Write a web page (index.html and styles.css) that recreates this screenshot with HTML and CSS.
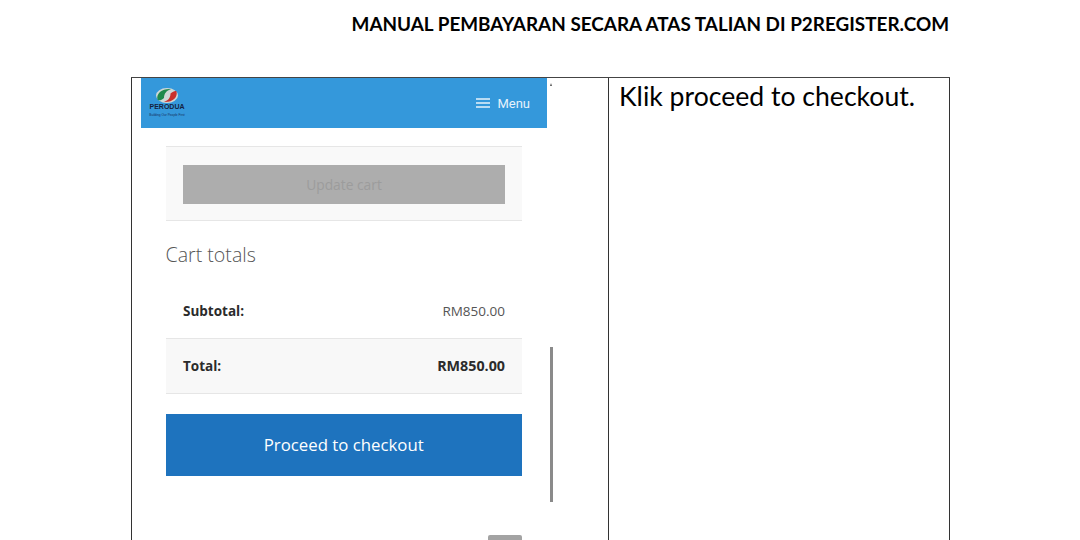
FILE: index.html
```html
<!DOCTYPE html>
<html lang="en">
<head>
  <meta charset="UTF-8">
  <title>Manual Pembayaran</title>
  <link rel="stylesheet" href="styles.css">
</head>
<body>
  <h1 class="doc-title">MANUAL PEMBAYARAN SECARA ATAS TALIAN DI P2REGISTER.COM</h1>

  <div class="doc-table">
    <div class="shot-cell">
      <div class="phone">
        <header class="nav">
          <div class="logo">
            <svg class="logo-mark" width="22" height="15" viewBox="0 0 22 15">
              <ellipse cx="11" cy="7.500" rx="11" ry="7.500" fill="#cfd8d6"/>
              <path d="M1.500 11.500C0 5.500 6 .5 15 1C10.500 2.500 8 5.500 8 10C5.500 12.500 2.500 13 1.500 11.500Z" fill="#1f8a4c"/>
              <path d="M20.500 3.500C22 9 17 14.500 8 14C12.500 12.500 14.500 9.500 14.500 5.500C17 3.500 19.500 2.500 20.500 3.500Z" fill="#c9302c"/>
            </svg>
            <span class="logo-name">PERODUA</span>
            <span class="logo-tag">Building Our People First</span>
          </div>
          <div class="menu">
            <svg width="14" height="10" viewBox="0 0 14 10">
              <path d="M0 1H14M0 5H14M0 9H14" stroke="#e6f2fb" stroke-width="1.300" fill="none"/>
            </svg>
            <span>Menu</span>
          </div>
        </header>

        <div class="content">
          <div class="update-row">
            <button class="update-btn">Update cart</button>
          </div>

          <h2 class="totals-title">Cart totals</h2>

          <div class="totals">
            <div class="totals-row">
              <strong>Subtotal:</strong>
              <span>RM850.00</span>
            </div>
            <div class="totals-row shaded">
              <strong>Total:</strong>
              <strong class="amount">RM850.00</strong>
            </div>
          </div>

          <button class="checkout-btn">Proceed to checkout</button>
          <div class="top-btn"></div>
        </div>
      </div>
      <div class="scroll-arrow"></div>
      <div class="scroll-thumb"></div>
    </div>
    <div class="text-cell">Klik proceed to checkout.</div>
  </div>
</body>
</html>
```

FILE: styles.css
```css
html, body {
  margin: 0;
  padding: 0;
  height: 540px;
  overflow: hidden;
  background: #fff;
  font-family: "Open Sans", "Liberation Sans", sans-serif;
}

/* document heading */
.doc-title {
  margin: 0;
  height: 77px;
  box-sizing: border-box;
  padding: 12px 131px 0 0;
  text-align: right;
  font-family: Lato, "Liberation Sans", sans-serif;
  font-size: 18.900px;
  line-height: 24px;
  font-weight: 700;
  color: #000;
}

/* two column table */
.doc-table {
  display: grid;
  grid-template-columns: 477px 342px;
  width: 819px;
  height: 463px;
  margin-left: 131px;
  box-sizing: border-box;
  border-top: 1px solid #444;
}

.shot-cell {
  position: relative;
  border-left: 1px solid #333;
  padding-left: 9px;
  overflow: hidden;
}

.text-cell {
  border-left: 1px solid #333;
  border-right: 1px solid #333;
  padding: 1px 0 0 10px;
  font-family: Lato, "Liberation Sans", sans-serif;
  font-size: 26.600px;
  line-height: 34px;
  color: #000;
}

/* screenshot of the phone page */
.phone {
  width: 406px;
}

.nav {
  display: flex;
  justify-content: space-between;
  align-items: center;
  height: 50px;
  padding: 0 17px 0 9px;
  background: #3498db;
}

.logo {
  display: flex;
  flex-direction: column;
  align-items: center;
  width: 34px;
}

.logo-mark {
  display: block;
}

.logo-name {
  font-family: "Liberation Sans", sans-serif;
  font-size: 7px;
  line-height: 7px;
  font-weight: 700;
  color: #14233f;
}

.logo-tag {
  margin-top: 3px;
  font-family: "Liberation Sans", sans-serif;
  font-size: 3.200px;
  line-height: 5px;
  white-space: nowrap;
  color: #17305c;
}

.menu {
  display: flex;
  align-items: center;
  gap: 7px;
  font-family: Roboto, sans-serif;
  font-size: 13px;
  color: #e6f2fb;
}

.content {
  padding: 18px 25px 0 24.500px;
}

.update-row {
  padding: 18px 17px 16px 17.500px;
  background: #f9f9f9;
  border-top: 1px solid #e6e6e6;
  border-bottom: 1px solid #e6e6e6;
}

.update-btn {
  display: block;
  width: 100%;
  height: 39px;
  padding: 0;
  border: none;
  background: #adadad;
  font-family: "Open Sans", sans-serif;
  font-size: 13.800px;
  color: #9c9c9c;
}

.totals-title {
  margin: 20px 0 15px;
  font-size: 19.600px;
  line-height: 27px;
  font-weight: 300;
  color: #555;
}

.totals {
  border-bottom: 1px solid #e6e6e6;
}

.totals-row {
  display: flex;
  justify-content: space-between;
  align-items: center;
  box-sizing: border-box;
  height: 55px;
  padding: 0 17px 0 17.500px;
  font-size: 13.500px;
  color: #555;
}

.totals-row strong {
  color: #2b2b2b;
}

.totals-row .amount {
  font-size: 14.300px;
  line-height: 16px;
  margin-top: -1px;
}

.totals-row.shaded {
  background: #f8f8f8;
  border-top: 1px solid #e6e6e6;
}

.checkout-btn {
  display: block;
  width: 100%;
  height: 62px;
  margin-top: 20px;
  padding: 0 0 2px;
  border: none;
  background: #1e73be;
  font-family: "Open Sans", sans-serif;
  font-size: 16.800px;
  color: #fff;
}

.top-btn {
  width: 34px;
  height: 10px;
  margin: 59px 0 0 auto;
  border-radius: 2px 2px 0 0;
  background: #a3a3a3;
}

/* page scrollbar in the screenshot */
.scroll-arrow {
  position: absolute;
  left: 418px;
  top: 5px;
  border-left: 1.500px solid transparent;
  border-right: 1.500px solid transparent;
  border-bottom: 3px solid #555;
}

.scroll-thumb {
  position: absolute;
  left: 418px;
  top: 269px;
  width: 3px;
  height: 155px;
  background: #8a8a8a;
}
```
